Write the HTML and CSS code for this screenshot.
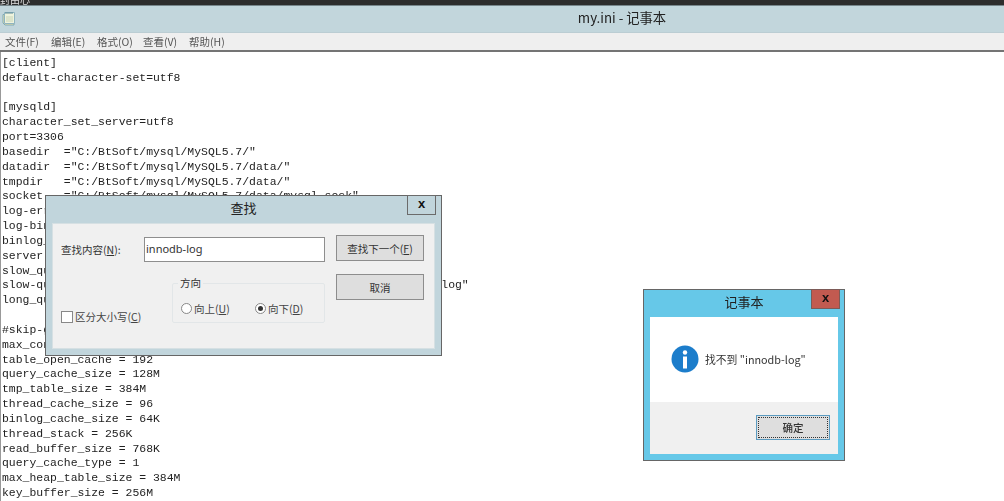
FILE: index.html
```html
<!DOCTYPE html>
<html lang="zh-CN">
<head>
<meta charset="utf-8">
<title>my.ini - 记事本</title>
<link rel="stylesheet" href="styles.css">
</head>
<body>
<div class="desktop">
  <div class="topstrip"><span class="topstrip-text">封由心</span></div>
  <div class="titlebar">
    <svg class="app-icon" width="14" height="15" viewBox="0 0 14 15">
      <path d="M1 3.5h11v10.5H3L1 12z" fill="#f3e6a8" stroke="#7fa9b5"/>
      <path d="M2.5 1.5h10v11h-10z" fill="#eef3dd" stroke="#8fb4c0"/>
      <path d="M4 1v2M6 1v2M8 1v2M10 1v2" stroke="#5f8996"/>
      <path d="M4 6h7M4 8h7M4 10h7" stroke="#c7d4b8"/>
    </svg>
    <span class="title">my.ini - 记事本</span>
  </div>
  <div class="menubar">
    <span class="menu">文件(F)</span>
    <span class="menu">编辑(E)</span>
    <span class="menu">格式(O)</span>
    <span class="menu">查看(V)</span>
    <span class="menu">帮助(H)</span>
  </div>
  <pre class="editor">[client]
default-character-set=utf8

[mysqld]
character_set_server=utf8
port=3306
basedir  ="C:/BtSoft/mysql/MySQL5.7/"
datadir  ="C:/BtSoft/mysql/MySQL5.7/data/"
tmpdir   ="C:/BtSoft/mysql/MySQL5.7/data/"
socket   ="C:/BtSoft/mysql/MySQL5.7/data/mysql.sock"
log-error="C:/BtSoft/mysql/MySQL5.7/data/mysql-error.log"
log-bin  ="C:/BtSoft/mysql/MySQL5.7/data/mysql-bin"
binlog_format=mixed
server-id=1
slow_query_log=1
slow-query-log-file  ="C:/BtSoft/mysql/MySQL5.7/data/mysql-slow.log"
long_query_time=3

#skip-grant-tables
max_connections=500
table_open_cache = 192
query_cache_size = 128M
tmp_table_size = 384M
thread_cache_size = 96
binlog_cache_size = 64K
thread_stack = 256K
read_buffer_size = 768K
query_cache_type = 1
max_heap_table_size = 384M
key_buffer_size = 256M</pre>

  <section class="dialog find">
    <header class="dialog-title">查找<span class="close">x</span></header>
    <div class="find-body">
      <div class="find-main">
        <div class="find-row">
          <label class="find-label">查找内容(<u>N</u>):</label>
          <div class="input">innodb-log</div>
        </div>
        <div class="find-lower">
          <label class="check"><span class="checkbox"></span>区分大小写(<u>C</u>)</label>
          <fieldset class="group">
            <legend>方向</legend>
            <label class="radio-item"><span class="radio"></span>向上(<u>U</u>)</label>
            <label class="radio-item"><span class="radio on"></span>向下(<u>D</u>)</label>
          </fieldset>
        </div>
      </div>
      <div class="find-actions">
        <span class="btn">查找下一个(<u>F</u>)</span>
        <span class="btn">取消</span>
      </div>
    </div>
  </section>

  <section class="dialog message">
    <header class="dialog-title">记事本<span class="close red">x</span></header>
    <div class="msg-content">
      <svg class="info" width="28" height="28" viewBox="0 0 28 28">
        <circle cx="14" cy="14" r="13.5" fill="#1c7dcb"/>
        <circle cx="14" cy="7.5" r="2.2" fill="#fff"/>
        <rect x="12" y="11.5" width="4" height="12" fill="#fff"/>
      </svg>
      <span class="msg-text">找不到 "innodb-log"</span>
    </div>
    <div class="msg-footer"><span class="btn ok"><span class="focus">确定</span></span></div>
  </section>
</div>
</body>
</html>
```
FILE: styles.css
```css
* { box-sizing: border-box; }
html, body { margin: 0; padding: 0; background: #fff; }
body { width: 1004px; height: 501px; overflow: hidden; }
.desktop {
  position: relative;
  width: 1004px;
  height: 501px;
  overflow: hidden;
  font-family: "Noto Sans CJK SC", "Noto Sans", sans-serif;
  color: #2a2a2a;
  filter: blur(0.3px);
}
.topstrip { height: 5px; background: #2d2d2d; overflow: hidden; color: #ddd; font-size: 10px; line-height: 5px; }
.topstrip-text { display: block; margin-top: -3px; }
.titlebar {
  height: 28px;
  background: #c2d6dc;
  border-top: 1px solid #77868b;
  border-bottom: 1px solid #bbcdd3;
  display: flex;
  align-items: center;
  position: relative;
  padding-left: 2px;
}
.app-icon { display: block; margin-top: -1px; }
.title { position: absolute; left: 0; right: 0; top: 1px; padding-left: 240px; text-align: center; font-size: 13.3px; line-height: 22px; color: #222; }
.menubar {
  height: 19px;
  background: #efefef;
  border-bottom: 2px solid #747474;
  display: flex;
  padding: 0 0 1px 5px;
  gap: 11.5px;
  align-items: center;
  font-size: 10.5px;
  color: #555;
}
.menu { width: 34.5px; white-space: nowrap; }
.editor {
  margin: 0;
  padding: 4px 0 0 1px;
  height: 449px;
  border-left: 1px solid #999;
  font-family: "Liberation Mono", "DejaVu Sans Mono", monospace;
  font-size: 11.45px;
  line-height: 14.83px;
  color: #222;
  white-space: pre;
  overflow: hidden;
}
.dialog {
  position: absolute;
  border: 1px solid #666;
  display: flex;
  flex-direction: column;
  font-size: 10.5px;
}
.dialog-title {
  position: relative;
  height: 27px;
  flex: none;
  text-align: center;
  font-size: 13px;
  line-height: 23px;
  color: #222;
}
.close {
  position: absolute;
  top: -1px;
  width: 29px;
  height: 20px;
  border: 1px solid #6b6b6b;
  text-align: center;
  font: bold 13px/15px "Liberation Sans", sans-serif;
  color: #111;
}
u { text-decoration: underline; }

.find { left: 45px; top: 195px; width: 397px; height: 161px; background: #c1d5dc; padding: 0 6px 6px; }
.find .close { right: 5px; }
.find .dialog-title { margin: 0 -6px; }
.find-body {
  flex: 1;
  background: #f0f0f0;
  border: 1px solid #d6e0e3;
  display: flex;
  padding: 11px 10px 0 8px;
  gap: 11px;
}
.find-main { width: 264px; display: flex; flex-direction: column; }
.find-row { display: flex; align-items: center; height: 25px; margin-top: 2px; }
.find-label { width: 83px; color: #333; white-space: nowrap; }
.input {
  width: 181px;
  height: 25px;
  background: #fff;
  border: 1px solid #8e8e8e;
  padding-left: 1px;
  font-size: 11px;
  line-height: 21px;
  color: #333;
  font-family: "Noto Sans", sans-serif;
}
.find-lower { display: flex; align-items: flex-end; margin-top: 15px; gap: 32px; }
.check { width: 79px; display: flex; align-items: center; white-space: nowrap; margin-bottom: -1px; color: #444; }
.checkbox { width: 12px; height: 12px; background: #fff; border: 1px solid #888; margin-right: 2px; flex: none; }
.group {
  margin: 0;
  width: 154px;
  height: 46px;
  padding: 12px 0 0 8px;
  border: 1px solid #e2e6e8;
  border-radius: 2px;
  display: flex;
  gap: 12px;
  color: #444;
}
.group legend { padding: 0 2px; margin-left: -3px; font-size: 10.5px; color: #333; line-height: 12px; }
.radio-item { display: flex; align-items: center; width: 62px; white-space: nowrap; height: 15px; }
.radio {
  position: relative;
  width: 11px;
  height: 11px;
  border: 1px solid #888;
  border-radius: 50%;
  background: #fff;
  margin-right: 2px;
  flex: none;
}
.radio.on::after {
  content: "";
  position: absolute;
  inset: 2px;
  background: #333;
  border-radius: 50%;
}
.find-actions { display: flex; flex-direction: column; gap: 13px; }
.btn {
  display: flex;
  align-items: center;
  justify-content: center;
  width: 88px;
  height: 26px;
  background: #dedede;
  border: 1px solid #8d8d8d;
  color: #333;
  white-space: nowrap;
}

.message { left: 643px; top: 289px; width: 202px; height: 172px; background: #66c8e8; padding: 0 6px 6px; }
.message .dialog-title { margin: 0 -6px; }
.message .close { right: 4px; }
.close.red { background: #c25a50; border-color: #7d5a57; }
.msg-content {
  height: 85px;
  flex: none;
  background: #fff;
  display: flex;
  align-items: center;
  padding: 0 0 2px 21px;
  gap: 6px;
  color: #333;
}
.msg-text { font-size: 10.8px; }
.msg-footer {
  flex: 1;
  background: #f0f0f0;
  display: flex;
  justify-content: flex-end;
  align-items: flex-start;
  padding: 13px 8px 0 0;
}
.btn.ok { width: 74px; height: 25px; border: 1px solid #5b9bc0; padding: 1px; font-weight: 500; }
.focus {
  flex: 1;
  height: 100%;
  display: flex;
  align-items: center;
  justify-content: center;
  border: 1px dotted #333;
}
```
